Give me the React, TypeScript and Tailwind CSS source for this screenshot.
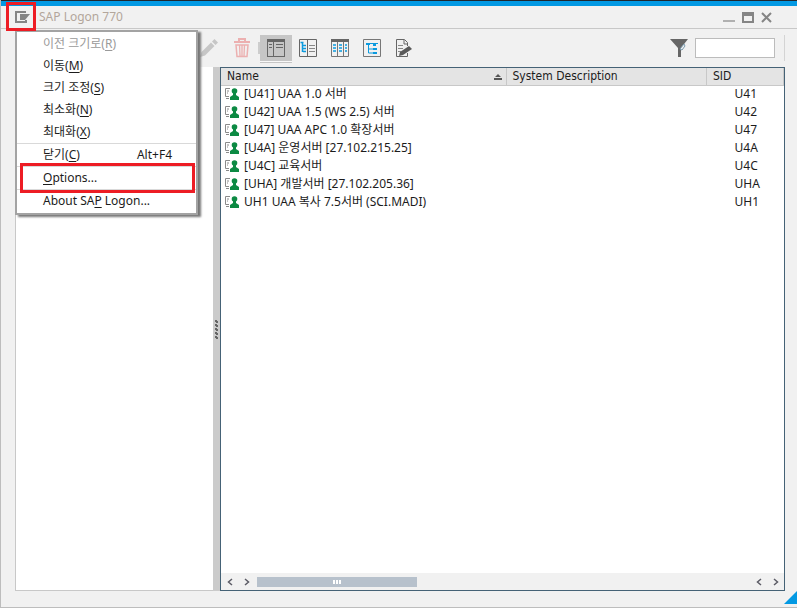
import React from "react";

const systems = [
  { name: "[U41] UAA 1.0 서버", sid: "U41" },
  { name: "[U42] UAA 1.5 (WS 2.5) 서버", sid: "U42" },
  { name: "[U47] UAA APC 1.0 확장서버", sid: "U47" },
  { name: "[U4A] 운영서버 [27.102.215.25]", sid: "U4A" },
  { name: "[U4C] 교육서버", sid: "U4C" },
  { name: "[UHA] 개발서버 [27.102.205.36]", sid: "UHA" },
  { name: "UH1 UAA 복사 7.5서버 (SCI.MADI)", sid: "UH1" },
];

const windowItems = [
  { label: "이전 크기로", hotkey: "R", disabled: true },
  { label: "이동", hotkey: "M", disabled: false },
  { label: "크기 조정", hotkey: "S", disabled: false },
  { label: "최소화", hotkey: "N", disabled: false },
  { label: "최대화", hotkey: "X", disabled: false },
];

function SystemIcon() {
  return (
    <svg width="14" height="12" viewBox="0 0 14 12" aria-hidden="true" className="shrink-0">
      <path d="M5 .5H.5v8H4M2 3h2M2 5h1M1 10.5h3" fill="none" stroke="#8a8a8a" />
      <circle cx="9.5" cy="3" r="2.8" fill="#0c8a43" />
      <path d="M8 5h3v2l3 2v3H5V9l3-2z" fill="#0c8a43" />
    </svg>
  );
}

function PencilIcon() {
  return (
    <svg width="20" height="20" viewBox="0 0 20 20" fill="#c6c6c6" aria-hidden="true">
      <path d="M1 19l1.500-5L12 4.500l3.500 3.500L6 17.500zM13 3.500L15.500 1 19 4.500 16.500 7z" />
    </svg>
  );
}

function TrashIcon() {
  return (
    <svg width="18" height="20" viewBox="0 0 18 20" fill="none" stroke="#ecb0b0" aria-hidden="true">
      <path d="M1 4h16M6 3V1h6v2" strokeWidth="2" />
      <path d="M3 7l1 11.500h10L15 7z" strokeWidth="1.500" />
      <path d="M6.500 7l.5 11M9 7v11M11.500 7L11 18" strokeWidth="1.300" />
    </svg>
  );
}

function ListIcon() {
  return (
    <svg width="18" height="18" viewBox="0 0 18 18" fill="none" aria-hidden="true">
      <rect x=".5" y=".5" width="17" height="17" stroke="#666" />
      <path d="M0 0h18v3H0zM6 0h1v18H6z" fill="#666" />
      <path d="M2 5.500h3M2 8.500h3M9 5.500h7M9 8.500h7" stroke="#666" />
    </svg>
  );
}

function TreeListIcon() {
  return (
    <svg width="18" height="18" viewBox="0 0 18 18" fill="none" aria-hidden="true">
      <path d="M.5 .5h17v17H.5zM8.500 1v16" stroke="#666" />
      <path d="M10 6.500h6M10 9.500h6M10 12.500h6" stroke="#888" />
      <path d="M3.500 3v10M1.500 3.500h3M4 6.500h3M4 9.500h3M4 12.500h3" stroke="#0b9ade" strokeWidth="1.500" />
    </svg>
  );
}

function ColumnsIcon() {
  return (
    <svg width="18" height="18" viewBox="0 0 18 18" fill="none" aria-hidden="true">
      <path d="M.5 .5h17v17H.5zM6.500 3v14M12.500 3v14" stroke="#777" />
      <path d="M0 0h18v3H0z" fill="#666" />
      <path d="M2 6h3M2 9h3M2 12h3M8 6h3M8 9h3M8 12h3M14 6h2M14 9h2M14 12h2" stroke="#0b9ade" strokeWidth="1.500" />
    </svg>
  );
}

function HierarchyIcon() {
  return (
    <svg width="18" height="18" viewBox="0 0 18 18" fill="none" aria-hidden="true">
      <path d="M.5 .5h17v17H.5z" stroke="#777" />
      <path d="M3 4h4v2H3zM10 5h3v2h-3zM10 9h4v2h-4zM10 13h4v2h-4z" fill="#0b9ade" />
      <path d="M5.500 5v9H10M5 10h5M6 4.500h9" stroke="#0b9ade" />
    </svg>
  );
}

function EditDocIcon() {
  return (
    <svg width="18" height="18" viewBox="0 0 18 18" fill="none" aria-hidden="true">
      <path d="M9.500 .5H1.500v17h11V14M9.500 .5l3 3V7M9 1v4h4" stroke="#666" />
      <path d="M3 6.500h5M3 9.500h5M3 12.500h3" stroke="#888" />
      <path d="M4 17l1-4 9-6 3 3-9 6z" fill="#5a5a5a" />
    </svg>
  );
}

function Chevron({ left = false }: { left?: boolean }) {
  return (
    <svg width="6" height="8" viewBox="0 0 6 8" fill="none" stroke="#5c5c66" strokeWidth="1.500" aria-hidden="true">
      <path d={left ? "M5 1L1.500 4 5 7" : "M1 1l3.500 3L1 7"} />
    </svg>
  );
}

const views = [
  { label: "List view", Icon: ListIcon, active: true },
  { label: "Tree view", Icon: TreeListIcon, active: false },
  { label: "Column view", Icon: ColumnsIcon, active: false },
  { label: "Hierarchy view", Icon: HierarchyIcon, active: false },
  { label: "Edit entry", Icon: EditDocIcon, active: false },
];

function SystemMenu() {
  const item = "flex h-[22px] w-full items-center pl-[26px] pr-6 text-left";
  return (
    <div
      role="menu"
      className="absolute left-[14px] top-[30px] w-[183px] border-2 border-[#a3a3a3] bg-white pb-px pt-px font-['Noto_Sans','Noto_Sans_CJK_KR',sans-serif] shadow-[3px_2px_2px_#777]"
    >
      {windowItems.map((entry) => (
        <button
          key={entry.hotkey}
          role="menuitem"
          disabled={entry.disabled}
          className={entry.disabled ? `${item} text-[#9a9a9a]` : item}
        >
          {entry.label}(<u className="underline-offset-2">{entry.hotkey}</u>)
        </button>
      ))}
      <hr className="border-[#d9d9d9]" />
      <button role="menuitem" className={item}>
        <span>
          닫기(<u className="underline-offset-2">C</u>)
        </span>
        <span className="ml-auto">Alt+F4</span>
      </button>
      <hr className="border-[#d9d9d9]" />
      <button role="menuitem" className={`${item} relative`}>
        <u className="underline-offset-2">O</u>ptions...
        <span className="pointer-events-none absolute -bottom-1 -top-1 left-[3px] right-px border-3 border-[#ed1c24]" />
      </button>
      <hr className="border-[#d9d9d9]" />
      <button role="menuitem" className={item}>
        About SA<u className="underline-offset-2">P</u>&nbsp;Logon...
      </button>
    </div>
  );
}

export default function App() {
  return (
    <div className="relative flex h-screen flex-col border-l border-[#bdbdbd] bg-[#f1f1f1] font-['DejaVu_Sans_Condensed','Noto_Sans_CJK_KR',sans-serif] text-[12px] leading-[18px] text-[#1c1c1c]">
      <div className="h-[6px] shrink-0 border-t border-[#202830] bg-[#0399e3]" />
      <header className="flex h-[23px] shrink-0 items-center border-b border-[#c8c8c8] pl-[14px] pr-[25px]">
        <button aria-label="System menu">
          <svg width="15" height="12" viewBox="0 0 15 12" fill="none" aria-hidden="true">
            <path d="M11 1H1v10h10V9" stroke="#858585" strokeWidth="2" />
            <path d="M5 3h10L10 9H5z" fill="#858585" />
          </svg>
        </button>
        <h1 className="ml-[9px] font-['Noto_Sans',sans-serif] text-[#b3a69b]">SAP Logon 770</h1>
        <div className="ml-auto flex items-center gap-[7px]">
          <button aria-label="Minimize" className="mt-2 h-[2px] w-3 bg-[#b0b0b0]" />
          <button aria-label="Maximize" className="h-[11px] w-3 border-2 border-t-4 border-[#858585]" />
          <button aria-label="Close">
            <svg width="11" height="11" viewBox="0 0 11 11" stroke="#858585" strokeWidth="2" aria-hidden="true">
              <path d="M1 1l9 9M10 1l-9 9" />
            </svg>
          </button>
        </div>
      </header>

      <div className="flex h-[38px] shrink-0 items-center pl-[198px] pr-3">
        <button aria-label="Edit" disabled>
          <PencilIcon />
        </button>
        <button aria-label="Delete" disabled className="ml-[14px]">
          <TrashIcon />
        </button>
        <span className="ml-[7px] h-3 w-[2px] bg-[#cdcdcd]" />
        <div className="flex">
          {views.map(({ label, Icon, active }) => (
            <button
              key={label}
              aria-label={label}
              aria-pressed={active}
              className={
                active
                  ? "flex h-[26px] w-8 items-center justify-center bg-[#c6c6c6] shadow-[0_1px_0_#f8f8f8,0_2px_0_#c6c6c6]"
                  : "flex h-[26px] w-8 items-center justify-center"
              }
            >
              <Icon />
            </button>
          ))}
        </div>
        <label htmlFor="filter" className="ml-auto" aria-label="Filter">
          <svg width="18" height="18" viewBox="0 0 18 18" aria-hidden="true">
            <path d="M0 0h18l-7 9v9H8V9z" fill="#666" />
            <path d="M14 5l1 2-3 4-2-1z" fill="#f1f1f1" stroke="#7899ad" />
          </svg>
        </label>
        <input id="filter" type="text" className="ml-[7px] h-5 w-20 border border-[#bcbcbc] bg-white px-1 outline-none" />
        <span className="ml-[9px] h-[26px] w-px bg-[#d4d4d4]" />
      </div>

      <main className="flex min-h-0 flex-1 pl-[14px] pr-3">
        <aside className="w-[198px] shrink-0 border-b border-l border-[#c8c8c8] bg-white" />
        <div className="flex w-[7px] shrink-0 flex-col items-center justify-center gap-px bg-[#cbcbcb]">
          {[0, 1, 2, 3, 4].map((n) => (
            <svg key={n} width="3" height="3" viewBox="0 0 3 3" fill="#666" aria-hidden="true">
              <path d="M0 0h2v1h1v2H1V2H0z" />
            </svg>
          ))}
        </div>
        <section className="flex min-w-0 flex-1 flex-col border border-[#456276] bg-white">
          <div className="min-h-0 flex-1">
            <table className="w-full table-fixed border-collapse">
              <thead>
                <tr className="bg-[#e4e4e4] text-left leading-[17px]">
                  <th className="w-[285px] border-b border-r border-[#c8c8c8] py-0 pl-[6px] pr-1 font-normal">
                    <span className="flex items-center justify-between">
                      Name
                      <svg width="8" height="6" viewBox="0 0 8 6" aria-hidden="true">
                        <path d="M4 0l3 3H1zM0 4h8v2H0z" fill="#555" />
                      </svg>
                    </span>
                  </th>
                  <th className="border-b border-r border-[#c8c8c8] px-[6px] py-0 font-normal">System Description</th>
                  <th className="w-[77px] border-b border-r border-[#c8c8c8] px-[6px] py-0 font-normal">SID</th>
                </tr>
              </thead>
              <tbody className="font-['Noto_Sans','Noto_Sans_CJK_KR',sans-serif]">
                {systems.map((system) => (
                  <tr key={system.sid}>
                    <td className="py-0 pl-1">
                      <span className="flex h-[18px] items-center gap-[5px] whitespace-nowrap pb-[2px]">
                        <SystemIcon />
                        {system.name}
                      </span>
                    </td>
                    <td className="p-0" />
                    <td className="py-0 pl-7">
                      <span className="flex h-[18px] items-center pb-[2px]">{system.sid}</span>
                    </td>
                  </tr>
                ))}
              </tbody>
            </table>
          </div>
          <div className="flex h-[17px] shrink-0 items-center bg-[#f1f1f1] pl-[6px] pr-[5px]">
            <button aria-label="Scroll to start">
              <Chevron left />
            </button>
            <button aria-label="Scroll right" className="ml-[11px]">
              <Chevron />
            </button>
            <div className="ml-[7px] flex h-[10px] w-40 items-center justify-center gap-px bg-[#b7c1cc]">
              <span className="h-1 w-[2px] bg-white" />
              <span className="h-1 w-[2px] bg-white" />
              <span className="h-1 w-[2px] bg-white" />
            </div>
            <button aria-label="Scroll left" className="ml-auto">
              <Chevron left />
            </button>
            <button aria-label="Scroll to end" className="ml-[11px]">
              <Chevron />
            </button>
          </div>
        </section>
      </main>

      <footer className="flex h-[17px] shrink-0 items-start justify-end border-b border-[#bdbdbd]">
        <svg width="13" height="13" viewBox="0 0 13 13" aria-hidden="true">
          <path d="M13 0v13H0z" fill="#0399e3" />
        </svg>
      </footer>

      <SystemMenu />
      <div className="pointer-events-none absolute left-[5px] top-[2px] h-[29px] w-[30px] border-3 border-[#ed1c24]" />
    </div>
  );
}
